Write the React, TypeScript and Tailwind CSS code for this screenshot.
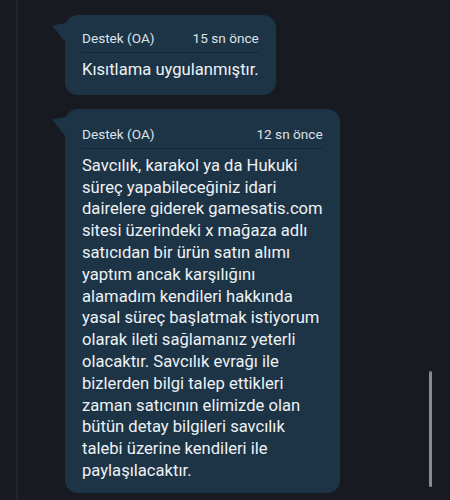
const lines = [
  "Savcılık, karakol ya da Hukuki",
  "süreç yapabileceğiniz idari",
  "dairelere giderek gamesatis.com",
  "sitesi üzerindeki x mağaza adlı",
  "satıcıdan bir ürün satın alımı",
  "yaptım ancak karşılığını",
  "alamadım kendileri hakkında",
  "yasal süreç başlatmak istiyorum",
  "olarak ileti sağlamanız yeterli",
  "olacaktır. Savcılık evrağı ile",
  "bizlerden bilgi talep ettikleri",
  "zaman satıcının elimizde olan",
  "bütün detay bilgileri savcılık",
  "talebi üzerine kendileri ile",
  "paylaşılacaktır.",
];

const Bubble = ({
  time,
  children,
  className,
}: {
  time: string;
  children: React.ReactNode;
  className: string;
}) => {
  return (
    <div className={"relative w-fit rounded-[13px] bg-[#1d3446] px-[17px] " + className}>
      {/* kuyruk */}
      <svg
        className="absolute left-[-13px] top-[8px]"
        width="14"
        height="20"
        viewBox="0 0 14 20"
      >
        <polygon points="0,2.5 14,0 14,20" fill="#1d3446" />
      </svg>
      <div className="flex justify-between gap-[14px] border-b border-[#132838] pb-[4px] text-[13.6px] leading-[20px] text-[#dce3e8]">
        <span>Destek (OA)</span>
        <span>{time}</span>
      </div>
      <div className="mt-[5.5px] text-[16.6px] leading-[21.8px] text-[#eef2f5]">
        {children}
      </div>
    </div>
  );
};

export default function App() {
  return (
    <div className="relative h-[500px] w-[450px] overflow-hidden bg-[#171a21] font-['Roboto',sans-serif]">
      <div className="ml-[16px] flex h-full flex-col gap-[14px] border-l-2 border-[#22252d] pl-[47px] pt-[15px]">
        <Bubble time="15 sn önce" className="pt-[13px] pb-[15px]">
          Kısıtlama uygulanmıştır.
        </Bubble>
        <Bubble time="12 sn önce" className="pt-[15px] pb-[11px]">
          {lines.map((l, i) => (
            <div key={i} className="whitespace-nowrap">
              {l}
            </div>
          ))}
        </Bubble>
      </div>
      {/* scrollbar */}
      <div className="absolute left-[429px] top-[371px] h-[116px] w-[3px] rounded-full bg-[#8a8a90]" />
    </div>
  );
}
